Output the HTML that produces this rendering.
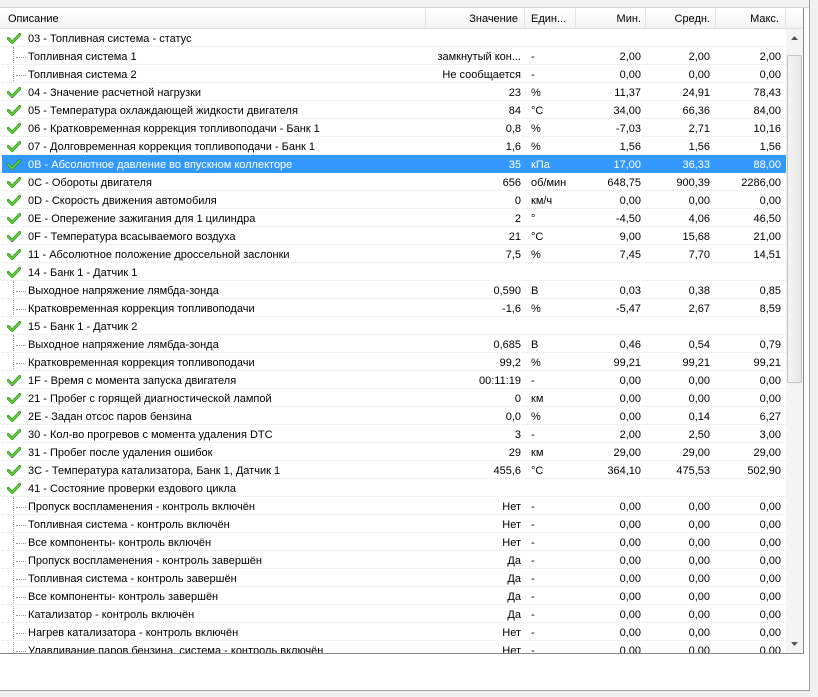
<!DOCTYPE html>
<html><head><meta charset="utf-8"><style>
body{margin:0;width:818px;height:697px;background:#f0f0f0;position:relative;overflow:hidden;font-family:"Liberation Sans","DejaVu Sans",sans-serif;font-size:11px;color:#000}
.frame{position:absolute;left:0;top:0;width:809px;height:690px;background:#fff;border-right:1px solid #a0a0a0;border-bottom:1px solid #a0a0a0}
.top{position:absolute;left:0;top:0;width:809px;height:7px;background:#f0f0f0;border-bottom:1px solid #d8d8d8}
.list{position:absolute;left:0;top:8px;width:803px;height:645px;border-right:1px solid #828790;border-bottom:1px solid #828790;overflow:hidden;background:#fff}
.hdr{position:absolute;left:0;top:0;width:803px;height:20px;background:linear-gradient(#fff,#f3f3f3);border-bottom:1px solid #e0e0e0}
.hdr span{position:absolute;top:5px}
.sep{position:absolute;top:0;width:1px;height:20px;background:#e2e2e2}
.r{position:absolute;left:2px;width:784px;height:18px;line-height:20px;border-bottom:1px dotted #e4e4e4;box-sizing:border-box}
.r span{position:absolute;white-space:nowrap}
.d{left:26px}.v{right:265px}.u{left:529px}.mn{right:145px}.av{right:76px}.mx{right:5px}
.sel{background:#3399ff;color:#fff;border-bottom:none}
.ck{position:absolute;left:5px;top:4px}
.vl{position:absolute;left:13px;border-left:1px dotted #999}
.hl{position:absolute;left:14px;width:10px;border-top:1px dotted #999;top:10px}
.sb{position:absolute;left:786px;top:21px;width:17px;height:624px;background:#f4f4f4}
.th{position:absolute;left:787px;top:47px;width:13px;height:326px;border:1px solid #c4c4c4;border-radius:2px;background:linear-gradient(90deg,#f4f4f4,#e6e6e6)}
</style></head><body>
<div class="frame"></div>
<div class="top"></div>
<div class="list">
<div class="hdr">
<span style="left:8px">Описание</span>
<span style="right:285px">Значение</span>
<span style="left:531px">Един...</span>
<span style="right:162px">Мин.</span>
<span style="right:93px">Средн.</span>
<span style="right:24px">Макс.</span>
<div class="sep" style="left:425px"></div><div class="sep" style="left:524px"></div><div class="sep" style="left:575px"></div><div class="sep" style="left:645px"></div><div class="sep" style="left:715px"></div><div class="sep" style="left:785px"></div>
</div>
<svg width="0" height="0" style="position:absolute"><defs><symbol id="c" viewBox="0 0 16 12"><path d="M1.5 6 L6 10.5 L14.5 1.5" fill="none" stroke="#2f8a1c" stroke-width="3.4" stroke-linejoin="round" stroke-linecap="round"/><path d="M1.5 6 L6 10.5 L14.5 1.5" fill="none" stroke="#5fd43a" stroke-width="1.8" stroke-linejoin="round" stroke-linecap="round"/></symbol></defs></svg>
<div class="vl" style="top:39px;height:36px"></div>
<div class="vl" style="top:273px;height:36px"></div>
<div class="vl" style="top:327px;height:36px"></div>
<div class="vl" style="top:489px;height:160px"></div>

<div class="r" style="top:21px"><svg class="ck" width="14" height="11"><use href="#c"/></svg><span class="d">03 - Топливная система - статус</span></div>
<div class="r" style="top:39px"><div class="hl"></div><span class="d">Топливная система 1</span><span class="v">замкнутый кон...</span><span class="u">-</span><span class="mn">2,00</span><span class="av">2,00</span><span class="mx">2,00</span></div>
<div class="r" style="top:57px"><div class="hl"></div><span class="d">Топливная система 2</span><span class="v">Не сообщается</span><span class="u">-</span><span class="mn">0,00</span><span class="av">0,00</span><span class="mx">0,00</span></div>
<div class="r" style="top:75px"><svg class="ck" width="14" height="11"><use href="#c"/></svg><span class="d">04 - Значение расчетной нагрузки</span><span class="v">23</span><span class="u">%</span><span class="mn">11,37</span><span class="av">24,91</span><span class="mx">78,43</span></div>
<div class="r" style="top:93px"><svg class="ck" width="14" height="11"><use href="#c"/></svg><span class="d">05 - Температура охлаждающей жидкости двигателя</span><span class="v">84</span><span class="u">°C</span><span class="mn">34,00</span><span class="av">66,36</span><span class="mx">84,00</span></div>
<div class="r" style="top:111px"><svg class="ck" width="14" height="11"><use href="#c"/></svg><span class="d">06 - Кратковременная коррекция топливоподачи - Банк 1</span><span class="v">0,8</span><span class="u">%</span><span class="mn">-7,03</span><span class="av">2,71</span><span class="mx">10,16</span></div>
<div class="r" style="top:129px"><svg class="ck" width="14" height="11"><use href="#c"/></svg><span class="d">07 - Долговременная коррекция топливоподачи - Банк 1</span><span class="v">1,6</span><span class="u">%</span><span class="mn">1,56</span><span class="av">1,56</span><span class="mx">1,56</span></div>
<div class="r sel" style="top:147px"><svg class="ck" width="14" height="11"><use href="#c"/></svg><span class="d">0B - Абсолютное давление во впускном коллекторе</span><span class="v">35</span><span class="u">кПа</span><span class="mn">17,00</span><span class="av">36,33</span><span class="mx">88,00</span></div>
<div class="r" style="top:165px"><svg class="ck" width="14" height="11"><use href="#c"/></svg><span class="d">0C - Обороты двигателя</span><span class="v">656</span><span class="u">об/мин</span><span class="mn">648,75</span><span class="av">900,39</span><span class="mx">2286,00</span></div>
<div class="r" style="top:183px"><svg class="ck" width="14" height="11"><use href="#c"/></svg><span class="d">0D - Скорость движения автомобиля</span><span class="v">0</span><span class="u">км/ч</span><span class="mn">0,00</span><span class="av">0,00</span><span class="mx">0,00</span></div>
<div class="r" style="top:201px"><svg class="ck" width="14" height="11"><use href="#c"/></svg><span class="d">0E - Опережение зажигания для 1 цилиндра</span><span class="v">2</span><span class="u">°</span><span class="mn">-4,50</span><span class="av">4,06</span><span class="mx">46,50</span></div>
<div class="r" style="top:219px"><svg class="ck" width="14" height="11"><use href="#c"/></svg><span class="d">0F - Температура всасываемого воздуха</span><span class="v">21</span><span class="u">°C</span><span class="mn">9,00</span><span class="av">15,68</span><span class="mx">21,00</span></div>
<div class="r" style="top:237px"><svg class="ck" width="14" height="11"><use href="#c"/></svg><span class="d">11 - Абсолютное положение дроссельной заслонки</span><span class="v">7,5</span><span class="u">%</span><span class="mn">7,45</span><span class="av">7,70</span><span class="mx">14,51</span></div>
<div class="r" style="top:255px"><svg class="ck" width="14" height="11"><use href="#c"/></svg><span class="d">14 - Банк 1 - Датчик 1</span></div>
<div class="r" style="top:273px"><div class="hl"></div><span class="d">Выходное напряжение лямбда-зонда</span><span class="v">0,590</span><span class="u">В</span><span class="mn">0,03</span><span class="av">0,38</span><span class="mx">0,85</span></div>
<div class="r" style="top:291px"><div class="hl"></div><span class="d">Кратковременная коррекция топливоподачи</span><span class="v">-1,6</span><span class="u">%</span><span class="mn">-5,47</span><span class="av">2,67</span><span class="mx">8,59</span></div>
<div class="r" style="top:309px"><svg class="ck" width="14" height="11"><use href="#c"/></svg><span class="d">15 - Банк 1 - Датчик 2</span></div>
<div class="r" style="top:327px"><div class="hl"></div><span class="d">Выходное напряжение лямбда-зонда</span><span class="v">0,685</span><span class="u">В</span><span class="mn">0,46</span><span class="av">0,54</span><span class="mx">0,79</span></div>
<div class="r" style="top:345px"><div class="hl"></div><span class="d">Кратковременная коррекция топливоподачи</span><span class="v">99,2</span><span class="u">%</span><span class="mn">99,21</span><span class="av">99,21</span><span class="mx">99,21</span></div>
<div class="r" style="top:363px"><svg class="ck" width="14" height="11"><use href="#c"/></svg><span class="d">1F - Время с момента запуска двигателя</span><span class="v">00:11:19</span><span class="u">-</span><span class="mn">0,00</span><span class="av">0,00</span><span class="mx">0,00</span></div>
<div class="r" style="top:381px"><svg class="ck" width="14" height="11"><use href="#c"/></svg><span class="d">21 - Пробег с горящей диагностической лампой</span><span class="v">0</span><span class="u">км</span><span class="mn">0,00</span><span class="av">0,00</span><span class="mx">0,00</span></div>
<div class="r" style="top:399px"><svg class="ck" width="14" height="11"><use href="#c"/></svg><span class="d">2E - Задан отсос паров бензина</span><span class="v">0,0</span><span class="u">%</span><span class="mn">0,00</span><span class="av">0,14</span><span class="mx">6,27</span></div>
<div class="r" style="top:417px"><svg class="ck" width="14" height="11"><use href="#c"/></svg><span class="d">30 - Кол-во прогревов с момента удаления DTC</span><span class="v">3</span><span class="u">-</span><span class="mn">2,00</span><span class="av">2,50</span><span class="mx">3,00</span></div>
<div class="r" style="top:435px"><svg class="ck" width="14" height="11"><use href="#c"/></svg><span class="d">31 - Пробег после удаления ошибок</span><span class="v">29</span><span class="u">км</span><span class="mn">29,00</span><span class="av">29,00</span><span class="mx">29,00</span></div>
<div class="r" style="top:453px"><svg class="ck" width="14" height="11"><use href="#c"/></svg><span class="d">3C - Температура катализатора, Банк 1, Датчик 1</span><span class="v">455,6</span><span class="u">°C</span><span class="mn">364,10</span><span class="av">475,53</span><span class="mx">502,90</span></div>
<div class="r" style="top:471px"><svg class="ck" width="14" height="11"><use href="#c"/></svg><span class="d">41 - Состояние проверки ездового цикла</span></div>
<div class="r" style="top:489px"><div class="hl"></div><span class="d">Пропуск воспламенения - контроль включён</span><span class="v">Нет</span><span class="u">-</span><span class="mn">0,00</span><span class="av">0,00</span><span class="mx">0,00</span></div>
<div class="r" style="top:507px"><div class="hl"></div><span class="d">Топливная система - контроль включён</span><span class="v">Нет</span><span class="u">-</span><span class="mn">0,00</span><span class="av">0,00</span><span class="mx">0,00</span></div>
<div class="r" style="top:525px"><div class="hl"></div><span class="d">Все компоненты- контроль включён</span><span class="v">Нет</span><span class="u">-</span><span class="mn">0,00</span><span class="av">0,00</span><span class="mx">0,00</span></div>
<div class="r" style="top:543px"><div class="hl"></div><span class="d">Пропуск воспламенения - контроль завершён</span><span class="v">Да</span><span class="u">-</span><span class="mn">0,00</span><span class="av">0,00</span><span class="mx">0,00</span></div>
<div class="r" style="top:561px"><div class="hl"></div><span class="d">Топливная система - контроль завершён</span><span class="v">Да</span><span class="u">-</span><span class="mn">0,00</span><span class="av">0,00</span><span class="mx">0,00</span></div>
<div class="r" style="top:579px"><div class="hl"></div><span class="d">Все компоненты- контроль завершён</span><span class="v">Да</span><span class="u">-</span><span class="mn">0,00</span><span class="av">0,00</span><span class="mx">0,00</span></div>
<div class="r" style="top:597px"><div class="hl"></div><span class="d">Катализатор - контроль включён</span><span class="v">Да</span><span class="u">-</span><span class="mn">0,00</span><span class="av">0,00</span><span class="mx">0,00</span></div>
<div class="r" style="top:615px"><div class="hl"></div><span class="d">Нагрев катализатора - контроль включён</span><span class="v">Нет</span><span class="u">-</span><span class="mn">0,00</span><span class="av">0,00</span><span class="mx">0,00</span></div>
<div class="r" style="top:633px"><div class="hl"></div><span class="d">Улавливание паров бензина, система - контроль включён</span><span class="v">Нет</span><span class="u">-</span><span class="mn">0,00</span><span class="av">0,00</span><span class="mx">0,00</span></div>

<div class="sb"></div>
<div class="th"></div>
<svg style="position:absolute;left:790px;top:27px" width="9" height="6"><path d="M1 5 L4.5 1 L8 5Z" fill="#555"/></svg>
<svg style="position:absolute;left:790px;top:633px" width="9" height="6"><path d="M1 1 L4.5 5 L8 1Z" fill="#555"/></svg>
</div>
</body></html>
